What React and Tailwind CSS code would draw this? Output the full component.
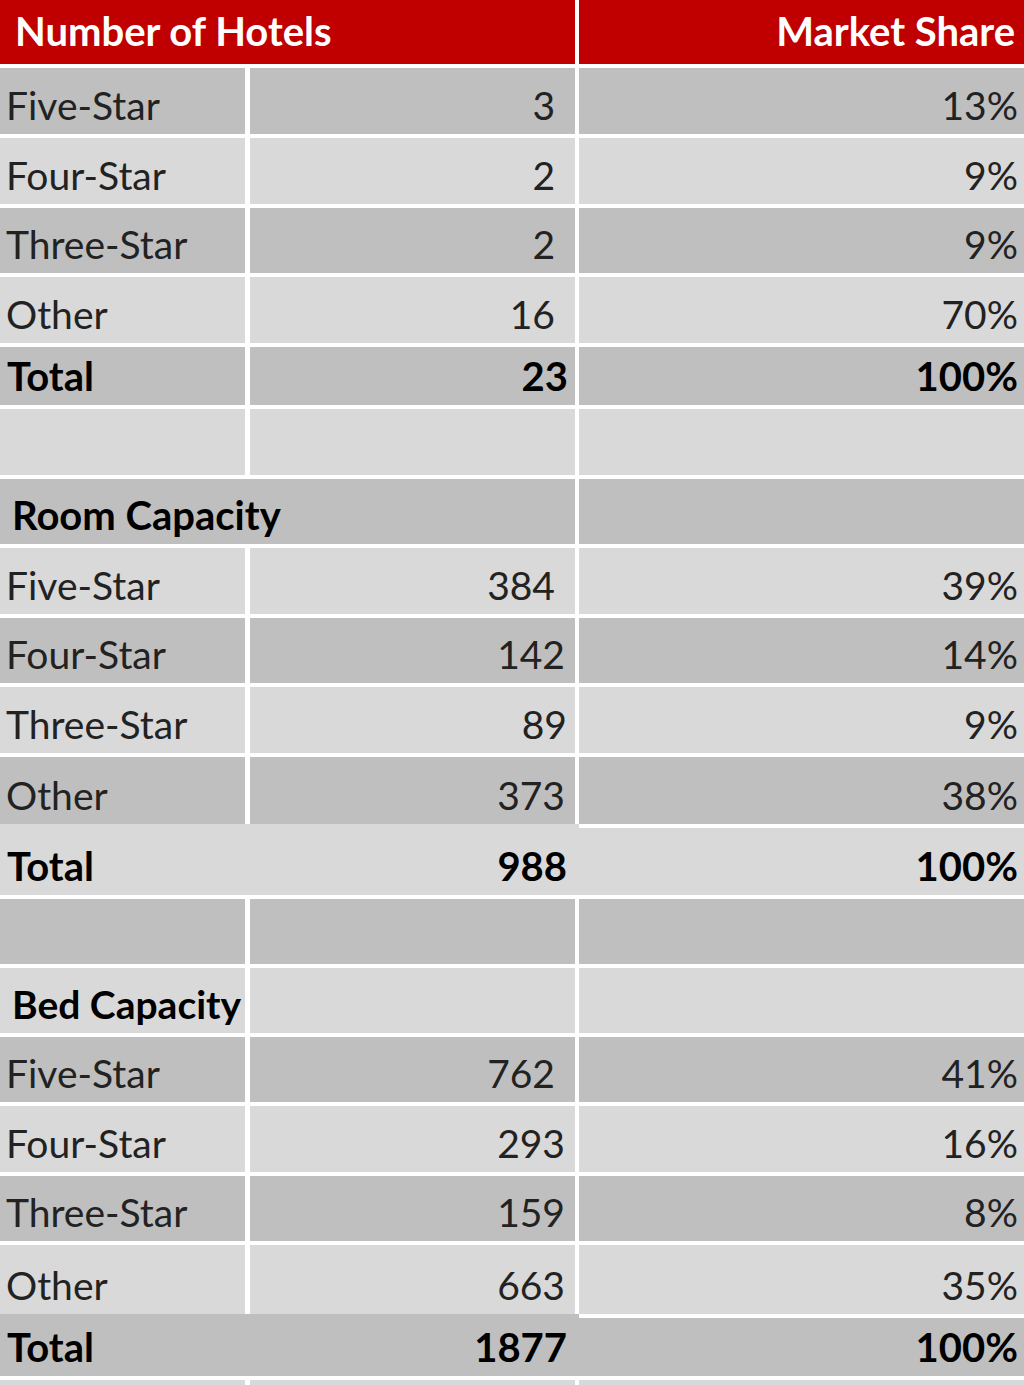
import React from "react";

const DARK = "bg-[#bfbfbf]";
const LIGHT = "bg-[#d9d9d9]";

function Cell({ className, children }) {
  return <div className={`flex items-end pb-[9px] leading-none overflow-hidden ${className}`}>{children}</div>;
}

function Row({ h, bg, label, labelClass = "pl-[6px]", bold, value, valueClass = "pr-[20px]", pct, mergeLabel }) {
  const weight = bold ? "font-bold text-black" : "text-[#222] text-[39px]";
  return (
    <div className={`flex gap-[4px] shrink-0 ${h}`}>
      {mergeLabel ? (
        <Cell className={`${bg} w-[575px] shrink-0 ${labelClass} ${weight}`}>{label}</Cell>
      ) : (
        <>
          <Cell className={`${bg} w-[245px] shrink-0 ${labelClass} ${weight} mr-[1px]`}>{label}</Cell>
          <Cell className={`${bg} w-[325px] shrink-0 justify-end ${valueClass} ${weight}`}>{value}</Cell>
        </>
      )}
      <Cell className={`${bg} flex-1 justify-end pr-[6px] ${weight}`}>{pct}</Cell>
    </div>
  );
}

function TotalRow({ h, bg, value, pct }) {
  return (
    <div className={`flex shrink-0 ${bg} ${h} font-bold text-black`}>
      <Cell className="w-[579px] shrink-0 pl-[7px] justify-between pr-[12px]">
        <span>Total</span>
        <span>{value}</span>
      </Cell>
      <Cell className="flex-1 justify-end pr-[6px] border-t-[4px] border-white">{pct}</Cell>
    </div>
  );
}

export default function App() {
  return (
    <div className="w-[1024px] h-[1385px] overflow-hidden bg-white text-[40px] font-['Lato',sans-serif] flex flex-col gap-[4px]">
      <div className="flex gap-[4px] h-[64px] shrink-0">
        <div className="w-[575px] bg-[#c00000] text-white font-bold flex items-center pl-[15px] pb-[2px] leading-none">Number of Hotels</div>
        <div className="flex-1 bg-[#c00000] text-white font-bold flex items-center justify-end pr-[9px] pb-[2px] leading-none">Market Share</div>
      </div>

      <Row h="h-[66px]" bg={DARK} label="Five-Star" value="3" pct="13%" />
      <Row h="h-[66px]" bg={LIGHT} label="Four-Star" value="2" pct="9%" />
      <Row h="h-[65px]" bg={DARK} label="Three-Star" value="2" pct="9%" />
      <Row h="h-[66px]" bg={LIGHT} label="Other" value="16" pct="70%" />
      <Row h="h-[58px]" bg={DARK} label="Total" labelClass="pl-[7px]" bold value="23" valueClass="pr-[7px]" pct="100%" />
      <Row h="h-[66px]" bg={LIGHT} label="" value="" pct="" />
      <Row h="h-[65px]" bg={DARK} label="Room Capacity" labelClass="pl-[12px]" bold mergeLabel pct="" />
      <Row h="h-[66px]" bg={LIGHT} label="Five-Star" value="384" pct="39%" />
      <Row h="h-[65px]" bg={DARK} label="Four-Star" value="142" valueClass="pr-[10px]" pct="14%" />
      <Row h="h-[66px]" bg={LIGHT} label="Three-Star" value="89" valueClass="pr-[8px]" pct="9%" />
      <div className="-mb-[4px] shrink-0">
        <Row h="h-[67px]" bg={DARK} label="Other" value="373" valueClass="pr-[10px]" pct="38%" />
      </div>
      <TotalRow h="h-[71px]" bg={LIGHT} value="988" pct="100%" />
      <Row h="h-[65px]" bg={DARK} label="" value="" pct="" />
      <Row h="h-[65px]" bg={LIGHT} label="Bed Capacity" labelClass="pl-[12px] whitespace-nowrap text-[39px]" bold value="" pct="" />
      <Row h="h-[65px]" bg={DARK} label="Five-Star" value="762" pct="41%" />
      <Row h="h-[66px]" bg={LIGHT} label="Four-Star" value="293" valueClass="pr-[10px]" pct="16%" />
      <Row h="h-[65px]" bg={DARK} label="Three-Star" value="159" valueClass="pr-[10px]" pct="8%" />
      <div className="-mb-[4px] shrink-0">
        <Row h="h-[69px]" bg={LIGHT} label="Other" value="663" valueClass="pr-[10px]" pct="35%" />
      </div>
      <TotalRow h="h-[62px]" bg={DARK} value="1877" pct="100%" />
      <Row h="h-[20px]" bg={LIGHT} label="" value="" pct="" />
    </div>
  );
}
